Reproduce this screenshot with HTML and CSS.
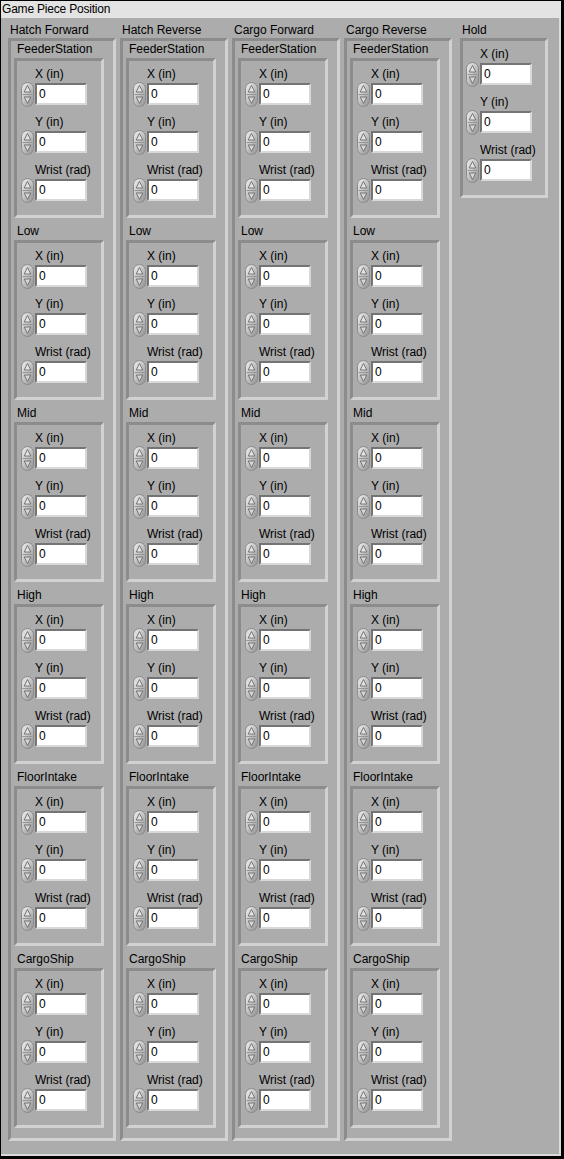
FILE: index.html
```html
<!DOCTYPE html>
<html>
<head>
<meta charset="utf-8">
<title>Game Piece Position</title>
<link rel="stylesheet" href="styles.css">
</head>
<body>
<svg class="defs" aria-hidden="true">
  <defs>
    <linearGradient id="sg" x1="0" y1="0" x2="1" y2="1">
      <stop offset="0" stop-color="#f0f0f0"/>
      <stop offset="0.5" stop-color="#c2c2c2"/>
      <stop offset="1" stop-color="#8e8e8e"/>
    </linearGradient>
    <symbol id="spin" viewBox="0 0 13 25">
      <rect x="0.5" y="0.5" width="12" height="24" rx="6" ry="6" fill="url(#sg)" stroke="#8a8a8a"/>
      <line x1="1.5" y1="12.5" x2="11.5" y2="12.5" stroke="#969696"/>
      <path d="M6.5 3.5 L9.8 10 H3.2 Z" fill="#e4e4e4" stroke="#6c6c6c" stroke-width="0.9"/>
      <path d="M6.5 21.5 L9.8 15 H3.2 Z" fill="#d6d6d6" stroke="#6c6c6c" stroke-width="0.9"/>
    </symbol>
  </defs>
</svg>
<div class="window">
  <div class="titlebar">Game Piece Position</div>
  <div class="panel">

    <div class="col">
      <div class="col-label">Hatch Forward</div>
      <div class="col-frame">
        <div class="sec"><div class="sec-label">FeederStation</div><div class="frame">
          <div class="ctl"><div class="lbl">X (in)</div><div class="num"><svg class="spin"><use href="#spin"/></svg><div class="box">0</div></div></div>
          <div class="ctl"><div class="lbl">Y (in)</div><div class="num"><svg class="spin"><use href="#spin"/></svg><div class="box">0</div></div></div>
          <div class="ctl"><div class="lbl">Wrist (rad)</div><div class="num"><svg class="spin"><use href="#spin"/></svg><div class="box">0</div></div></div>
        </div></div>
        <div class="sec"><div class="sec-label">Low</div><div class="frame">
          <div class="ctl"><div class="lbl">X (in)</div><div class="num"><svg class="spin"><use href="#spin"/></svg><div class="box">0</div></div></div>
          <div class="ctl"><div class="lbl">Y (in)</div><div class="num"><svg class="spin"><use href="#spin"/></svg><div class="box">0</div></div></div>
          <div class="ctl"><div class="lbl">Wrist (rad)</div><div class="num"><svg class="spin"><use href="#spin"/></svg><div class="box">0</div></div></div>
        </div></div>
        <div class="sec"><div class="sec-label">Mid</div><div class="frame">
          <div class="ctl"><div class="lbl">X (in)</div><div class="num"><svg class="spin"><use href="#spin"/></svg><div class="box">0</div></div></div>
          <div class="ctl"><div class="lbl">Y (in)</div><div class="num"><svg class="spin"><use href="#spin"/></svg><div class="box">0</div></div></div>
          <div class="ctl"><div class="lbl">Wrist (rad)</div><div class="num"><svg class="spin"><use href="#spin"/></svg><div class="box">0</div></div></div>
        </div></div>
        <div class="sec"><div class="sec-label">High</div><div class="frame">
          <div class="ctl"><div class="lbl">X (in)</div><div class="num"><svg class="spin"><use href="#spin"/></svg><div class="box">0</div></div></div>
          <div class="ctl"><div class="lbl">Y (in)</div><div class="num"><svg class="spin"><use href="#spin"/></svg><div class="box">0</div></div></div>
          <div class="ctl"><div class="lbl">Wrist (rad)</div><div class="num"><svg class="spin"><use href="#spin"/></svg><div class="box">0</div></div></div>
        </div></div>
        <div class="sec"><div class="sec-label">FloorIntake</div><div class="frame">
          <div class="ctl"><div class="lbl">X (in)</div><div class="num"><svg class="spin"><use href="#spin"/></svg><div class="box">0</div></div></div>
          <div class="ctl"><div class="lbl">Y (in)</div><div class="num"><svg class="spin"><use href="#spin"/></svg><div class="box">0</div></div></div>
          <div class="ctl"><div class="lbl">Wrist (rad)</div><div class="num"><svg class="spin"><use href="#spin"/></svg><div class="box">0</div></div></div>
        </div></div>
        <div class="sec"><div class="sec-label">CargoShip</div><div class="frame">
          <div class="ctl"><div class="lbl">X (in)</div><div class="num"><svg class="spin"><use href="#spin"/></svg><div class="box">0</div></div></div>
          <div class="ctl"><div class="lbl">Y (in)</div><div class="num"><svg class="spin"><use href="#spin"/></svg><div class="box">0</div></div></div>
          <div class="ctl"><div class="lbl">Wrist (rad)</div><div class="num"><svg class="spin"><use href="#spin"/></svg><div class="box">0</div></div></div>
        </div></div>
      </div>
    </div>

    <div class="col">
      <div class="col-label">Hatch Reverse</div>
      <div class="col-frame">
        <div class="sec"><div class="sec-label">FeederStation</div><div class="frame">
          <div class="ctl"><div class="lbl">X (in)</div><div class="num"><svg class="spin"><use href="#spin"/></svg><div class="box">0</div></div></div>
          <div class="ctl"><div class="lbl">Y (in)</div><div class="num"><svg class="spin"><use href="#spin"/></svg><div class="box">0</div></div></div>
          <div class="ctl"><div class="lbl">Wrist (rad)</div><div class="num"><svg class="spin"><use href="#spin"/></svg><div class="box">0</div></div></div>
        </div></div>
        <div class="sec"><div class="sec-label">Low</div><div class="frame">
          <div class="ctl"><div class="lbl">X (in)</div><div class="num"><svg class="spin"><use href="#spin"/></svg><div class="box">0</div></div></div>
          <div class="ctl"><div class="lbl">Y (in)</div><div class="num"><svg class="spin"><use href="#spin"/></svg><div class="box">0</div></div></div>
          <div class="ctl"><div class="lbl">Wrist (rad)</div><div class="num"><svg class="spin"><use href="#spin"/></svg><div class="box">0</div></div></div>
        </div></div>
        <div class="sec"><div class="sec-label">Mid</div><div class="frame">
          <div class="ctl"><div class="lbl">X (in)</div><div class="num"><svg class="spin"><use href="#spin"/></svg><div class="box">0</div></div></div>
          <div class="ctl"><div class="lbl">Y (in)</div><div class="num"><svg class="spin"><use href="#spin"/></svg><div class="box">0</div></div></div>
          <div class="ctl"><div class="lbl">Wrist (rad)</div><div class="num"><svg class="spin"><use href="#spin"/></svg><div class="box">0</div></div></div>
        </div></div>
        <div class="sec"><div class="sec-label">High</div><div class="frame">
          <div class="ctl"><div class="lbl">X (in)</div><div class="num"><svg class="spin"><use href="#spin"/></svg><div class="box">0</div></div></div>
          <div class="ctl"><div class="lbl">Y (in)</div><div class="num"><svg class="spin"><use href="#spin"/></svg><div class="box">0</div></div></div>
          <div class="ctl"><div class="lbl">Wrist (rad)</div><div class="num"><svg class="spin"><use href="#spin"/></svg><div class="box">0</div></div></div>
        </div></div>
        <div class="sec"><div class="sec-label">FloorIntake</div><div class="frame">
          <div class="ctl"><div class="lbl">X (in)</div><div class="num"><svg class="spin"><use href="#spin"/></svg><div class="box">0</div></div></div>
          <div class="ctl"><div class="lbl">Y (in)</div><div class="num"><svg class="spin"><use href="#spin"/></svg><div class="box">0</div></div></div>
          <div class="ctl"><div class="lbl">Wrist (rad)</div><div class="num"><svg class="spin"><use href="#spin"/></svg><div class="box">0</div></div></div>
        </div></div>
        <div class="sec"><div class="sec-label">CargoShip</div><div class="frame">
          <div class="ctl"><div class="lbl">X (in)</div><div class="num"><svg class="spin"><use href="#spin"/></svg><div class="box">0</div></div></div>
          <div class="ctl"><div class="lbl">Y (in)</div><div class="num"><svg class="spin"><use href="#spin"/></svg><div class="box">0</div></div></div>
          <div class="ctl"><div class="lbl">Wrist (rad)</div><div class="num"><svg class="spin"><use href="#spin"/></svg><div class="box">0</div></div></div>
        </div></div>
      </div>
    </div>

    <div class="col">
      <div class="col-label">Cargo Forward</div>
      <div class="col-frame">
        <div class="sec"><div class="sec-label">FeederStation</div><div class="frame">
          <div class="ctl"><div class="lbl">X (in)</div><div class="num"><svg class="spin"><use href="#spin"/></svg><div class="box">0</div></div></div>
          <div class="ctl"><div class="lbl">Y (in)</div><div class="num"><svg class="spin"><use href="#spin"/></svg><div class="box">0</div></div></div>
          <div class="ctl"><div class="lbl">Wrist (rad)</div><div class="num"><svg class="spin"><use href="#spin"/></svg><div class="box">0</div></div></div>
        </div></div>
        <div class="sec"><div class="sec-label">Low</div><div class="frame">
          <div class="ctl"><div class="lbl">X (in)</div><div class="num"><svg class="spin"><use href="#spin"/></svg><div class="box">0</div></div></div>
          <div class="ctl"><div class="lbl">Y (in)</div><div class="num"><svg class="spin"><use href="#spin"/></svg><div class="box">0</div></div></div>
          <div class="ctl"><div class="lbl">Wrist (rad)</div><div class="num"><svg class="spin"><use href="#spin"/></svg><div class="box">0</div></div></div>
        </div></div>
        <div class="sec"><div class="sec-label">Mid</div><div class="frame">
          <div class="ctl"><div class="lbl">X (in)</div><div class="num"><svg class="spin"><use href="#spin"/></svg><div class="box">0</div></div></div>
          <div class="ctl"><div class="lbl">Y (in)</div><div class="num"><svg class="spin"><use href="#spin"/></svg><div class="box">0</div></div></div>
          <div class="ctl"><div class="lbl">Wrist (rad)</div><div class="num"><svg class="spin"><use href="#spin"/></svg><div class="box">0</div></div></div>
        </div></div>
        <div class="sec"><div class="sec-label">High</div><div class="frame">
          <div class="ctl"><div class="lbl">X (in)</div><div class="num"><svg class="spin"><use href="#spin"/></svg><div class="box">0</div></div></div>
          <div class="ctl"><div class="lbl">Y (in)</div><div class="num"><svg class="spin"><use href="#spin"/></svg><div class="box">0</div></div></div>
          <div class="ctl"><div class="lbl">Wrist (rad)</div><div class="num"><svg class="spin"><use href="#spin"/></svg><div class="box">0</div></div></div>
        </div></div>
        <div class="sec"><div class="sec-label">FloorIntake</div><div class="frame">
          <div class="ctl"><div class="lbl">X (in)</div><div class="num"><svg class="spin"><use href="#spin"/></svg><div class="box">0</div></div></div>
          <div class="ctl"><div class="lbl">Y (in)</div><div class="num"><svg class="spin"><use href="#spin"/></svg><div class="box">0</div></div></div>
          <div class="ctl"><div class="lbl">Wrist (rad)</div><div class="num"><svg class="spin"><use href="#spin"/></svg><div class="box">0</div></div></div>
        </div></div>
        <div class="sec"><div class="sec-label">CargoShip</div><div class="frame">
          <div class="ctl"><div class="lbl">X (in)</div><div class="num"><svg class="spin"><use href="#spin"/></svg><div class="box">0</div></div></div>
          <div class="ctl"><div class="lbl">Y (in)</div><div class="num"><svg class="spin"><use href="#spin"/></svg><div class="box">0</div></div></div>
          <div class="ctl"><div class="lbl">Wrist (rad)</div><div class="num"><svg class="spin"><use href="#spin"/></svg><div class="box">0</div></div></div>
        </div></div>
      </div>
    </div>

    <div class="col">
      <div class="col-label">Cargo Reverse</div>
      <div class="col-frame">
        <div class="sec"><div class="sec-label">FeederStation</div><div class="frame">
          <div class="ctl"><div class="lbl">X (in)</div><div class="num"><svg class="spin"><use href="#spin"/></svg><div class="box">0</div></div></div>
          <div class="ctl"><div class="lbl">Y (in)</div><div class="num"><svg class="spin"><use href="#spin"/></svg><div class="box">0</div></div></div>
          <div class="ctl"><div class="lbl">Wrist (rad)</div><div class="num"><svg class="spin"><use href="#spin"/></svg><div class="box">0</div></div></div>
        </div></div>
        <div class="sec"><div class="sec-label">Low</div><div class="frame">
          <div class="ctl"><div class="lbl">X (in)</div><div class="num"><svg class="spin"><use href="#spin"/></svg><div class="box">0</div></div></div>
          <div class="ctl"><div class="lbl">Y (in)</div><div class="num"><svg class="spin"><use href="#spin"/></svg><div class="box">0</div></div></div>
          <div class="ctl"><div class="lbl">Wrist (rad)</div><div class="num"><svg class="spin"><use href="#spin"/></svg><div class="box">0</div></div></div>
        </div></div>
        <div class="sec"><div class="sec-label">Mid</div><div class="frame">
          <div class="ctl"><div class="lbl">X (in)</div><div class="num"><svg class="spin"><use href="#spin"/></svg><div class="box">0</div></div></div>
          <div class="ctl"><div class="lbl">Y (in)</div><div class="num"><svg class="spin"><use href="#spin"/></svg><div class="box">0</div></div></div>
          <div class="ctl"><div class="lbl">Wrist (rad)</div><div class="num"><svg class="spin"><use href="#spin"/></svg><div class="box">0</div></div></div>
        </div></div>
        <div class="sec"><div class="sec-label">High</div><div class="frame">
          <div class="ctl"><div class="lbl">X (in)</div><div class="num"><svg class="spin"><use href="#spin"/></svg><div class="box">0</div></div></div>
          <div class="ctl"><div class="lbl">Y (in)</div><div class="num"><svg class="spin"><use href="#spin"/></svg><div class="box">0</div></div></div>
          <div class="ctl"><div class="lbl">Wrist (rad)</div><div class="num"><svg class="spin"><use href="#spin"/></svg><div class="box">0</div></div></div>
        </div></div>
        <div class="sec"><div class="sec-label">FloorIntake</div><div class="frame">
          <div class="ctl"><div class="lbl">X (in)</div><div class="num"><svg class="spin"><use href="#spin"/></svg><div class="box">0</div></div></div>
          <div class="ctl"><div class="lbl">Y (in)</div><div class="num"><svg class="spin"><use href="#spin"/></svg><div class="box">0</div></div></div>
          <div class="ctl"><div class="lbl">Wrist (rad)</div><div class="num"><svg class="spin"><use href="#spin"/></svg><div class="box">0</div></div></div>
        </div></div>
        <div class="sec"><div class="sec-label">CargoShip</div><div class="frame">
          <div class="ctl"><div class="lbl">X (in)</div><div class="num"><svg class="spin"><use href="#spin"/></svg><div class="box">0</div></div></div>
          <div class="ctl"><div class="lbl">Y (in)</div><div class="num"><svg class="spin"><use href="#spin"/></svg><div class="box">0</div></div></div>
          <div class="ctl"><div class="lbl">Wrist (rad)</div><div class="num"><svg class="spin"><use href="#spin"/></svg><div class="box">0</div></div></div>
        </div></div>
      </div>
    </div>

    <div class="col hold">
      <div class="col-label">Hold</div>
      <div class="frame">
        <div class="ctl"><div class="lbl">X (in)</div><div class="num"><svg class="spin"><use href="#spin"/></svg><div class="box">0</div></div></div>
        <div class="ctl"><div class="lbl">Y (in)</div><div class="num"><svg class="spin"><use href="#spin"/></svg><div class="box">0</div></div></div>
        <div class="ctl"><div class="lbl">Wrist (rad)</div><div class="num"><svg class="spin"><use href="#spin"/></svg><div class="box">0</div></div></div>
      </div>
    </div>

  </div>
</div>
</body>
</html>
```

FILE: styles.css
```css
html, body {
  margin: 0;
  padding: 0;
  background: #acacac;
}

.defs {
  display: block;
  width: 0;
  height: 0;
  overflow: hidden;
}

.window {
  width: 564px;
  height: 1159px;
  box-sizing: border-box;
  border-style: solid;
  border-color: #000;
  border-width: 1px 3px 3px 1px;
  background: #acacac;
  font-family: "Liberation Sans", Arial, sans-serif;
  font-size: 12px;
  color: #000;
  display: flex;
  flex-direction: column;
}

.titlebar {
  height: 17px;
  line-height: 17px;
  padding-left: 1px;
  background: #e3e3e3;
  white-space: nowrap;
  letter-spacing: -0.2px;
}

.panel {
  flex: 1;
  display: flex;
  align-items: flex-start;
  gap: 4px;
  padding: 4px 0 0 7px;
  border-right: 2px solid #dadada;
  border-bottom: 2px solid #dadada;
}

.col {
  width: 108px;
  flex: none;
}

.col-label {
  height: 14px;
  line-height: 16px;
  padding-left: 2px;
  margin-bottom: 2px;
  white-space: nowrap;
}

.col-frame {
  border: 3px solid;
  border-color: #8c8c8c #d2d2d2 #d2d2d2 #8c8c8c;
  padding: 0 9px 10px 3px;
}

.sec + .sec {
  margin-top: 5px;
}

.sec-label {
  height: 14px;
  line-height: 16px;
  padding-left: 3px;
  margin-bottom: 3px;
  white-space: nowrap;
}

.frame {
  width: 90px;
  box-sizing: border-box;
  border: 3px solid;
  border-color: #8c8c8c #d2d2d2 #d2d2d2 #8c8c8c;
  padding: 5px 0 14px 4px;
}

.hold {
  width: 88px;
  margin-left: 4px;
}

.hold .frame {
  width: 88px;
  padding-left: 3px;
}

.ctl + .ctl {
  margin-top: 9px;
}

.lbl {
  height: 14px;
  line-height: 16px;
  padding-left: 14px;
  white-space: nowrap;
}

.num {
  display: flex;
  align-items: center;
  height: 22px;
  margin-top: 3px;
}

.spin {
  width: 13px;
  height: 25px;
  flex: none;
  margin-right: 1px;
}

.box {
  width: 52px;
  height: 22px;
  box-sizing: border-box;
  border: 2px solid;
  border-color: #747474 #d8d8d8 #d8d8d8 #747474;
  background: #fff;
  padding-left: 2px;
  line-height: 19px;
  font-size: 12px;
}
```
